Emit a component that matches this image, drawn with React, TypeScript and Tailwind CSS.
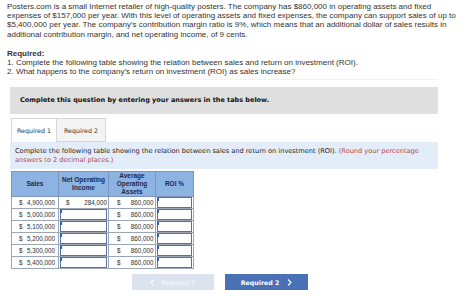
import React from "react";

const rows = [
  { sales: "4,900,000", noi: "284,000" },
  { sales: "5,000,000" },
  { sales: "5,100,000" },
  { sales: "5,200,000" },
  { sales: "5,300,000" },
  { sales: "5,400,000" },
];

function InputCell() {
  return (
    <td className="relative p-0 border border-[#9aa5b5] bg-white">
      <div className="h-[11px] mx-[1px] border border-[#5a7198] bg-white" />
      <div className="absolute left-[1px] top-[1px] w-[2px] h-[3px] bg-[#2f5fb3]" />
    </td>
  );
}

function Chevron({ left, color }: { left?: boolean; color: string }) {
  return (
    <svg width="5" height="7" viewBox="0 0 5 7" fill="none">
      <path
        d={left ? "M4 0.5L1 3.5L4 6.5" : "M1 0.5L4 3.5L1 6.5"}
        stroke={color}
        strokeWidth="1.1"
      />
    </svg>
  );
}

export default function App() {
  return (
    <div className="w-[474px] h-[296px] bg-white overflow-hidden font-['Liberation_Sans',Arial,sans-serif]">
      <div className="pl-[7px] pt-[2px] text-[8px] leading-[9.2px] text-[#333]">
        <p>
          Posters.com is a small Internet retailer of high-quality posters. The company has $860,000 in operating assets and fixed
          <br />
          expenses of $157,000 per year. With this level of operating assets and fixed expenses, the company can support sales of up to
          <br />
          $5,400,000 per year. The company’s contribution margin ratio is 9%, which means that an additional dollar of sales results in
          <br />
          additional contribution margin, and net operating income, of 9 cents.
        </p>
        <p className="mt-[9.8px] font-bold">Required:</p>
        <p>1. Complete the following table showing the relation between sales and return on investment (ROI).</p>
        <p>2. What happens to the company’s return on investment (ROI) as sales increase?</p>
      </div>

      <div className="ml-[10px] w-[428px] mt-[3px] border-t border-[#f1f1f1]" />

      <div className="ml-[10px] w-[428px] mt-[7px]">
        <div className="h-[27px] bg-[#dfdfdf] flex items-center pl-[10px] font-['DejaVu_Sans',Verdana,sans-serif] font-bold text-[6.5px] text-[#111]">
          Complete this question by entering your answers in the tabs below.
        </div>

        <div className="mt-[4px] h-[24px] flex font-['DejaVu_Sans',Verdana,sans-serif] text-[6.3px] text-[#333]">
          <div className="ml-[1px] w-[46px] h-full bg-white border border-b-0 border-[#d6d6d6] flex items-center justify-center">
            Required 1
          </div>
          <div className="w-[49px] h-full bg-[#f3f3f3] border border-l-0 border-[#d6d6d6] flex items-center justify-center">
            Required 2
          </div>
        </div>

        <div className="h-[27px] bg-[#e2edf9] pl-[5px] pt-[4.5px] font-['DejaVu_Sans',Verdana,sans-serif] text-[6.6px] leading-[9px] text-[#222]">
          Complete the following table showing the relation between sales and return on investment (ROI).{" "}
          <span className="text-[#b8474a]">(Round your percentage</span>
          <br />
          <span className="text-[#b8474a]">answers to 2 decimal places.)</span>
        </div>

        <table className="mt-[2px] ml-[1px] border-collapse text-[6.3px] text-[#2d2d2d] table-fixed">
          <colgroup>
            <col className="w-[47px]" />
            <col className="w-[50px]" />
            <col className="w-[47px]" />
            <col className="w-[38px]" />
          </colgroup>
          <thead>
            <tr className="h-[25px] bg-[#8db3e2] text-[#1d2a44] text-[6.5px] font-bold leading-[8px]">
              <th className="border border-[#7d96bd] font-bold">Sales</th>
              <th className="border border-[#7d96bd] font-bold">
                Net Operating
                <br />
                Income
              </th>
              <th className="border border-[#7d96bd] font-bold">
                Average
                <br />
                Operating
                <br />
                Assets
              </th>
              <th className="border border-[#7d96bd] font-bold">ROI %</th>
            </tr>
          </thead>
          <tbody>
            {rows.map((r) => (
              <tr key={r.sales} className="h-[12px] leading-[11px]">
                <td className="border border-[#9aa5b5] p-0">
                  <div className="flex justify-between pl-[7px] pr-[3px]">
                    <span>$</span>
                    <span>{r.sales}</span>
                  </div>
                </td>
                {r.noi ? (
                  <td className="border border-[#9aa5b5] p-0">
                    <div className="flex justify-between pl-[7px] pr-[1px]">
                      <span>$</span>
                      <span>{r.noi}</span>
                    </div>
                  </td>
                ) : (
                  <InputCell />
                )}
                <td className="border border-[#9aa5b5] p-0">
                  <div className="flex justify-between pl-[8px] pr-[1.5px]">
                    <span>$</span>
                    <span>860,000</span>
                  </div>
                </td>
                <InputCell />
              </tr>
            ))}
          </tbody>
        </table>

        <div className="mt-[5px] ml-[122px] flex gap-[11px] font-['DejaVu_Sans',Verdana,sans-serif] text-[6.3px]">
          <div className="w-[82px] h-[16px] bg-[#dde3ee] text-[#f7f9fc] flex items-center justify-center gap-[6px]">
            <Chevron left color="#f7f9fc" />
            <span>Required 1</span>
          </div>
          <div className="w-[83px] h-[16px] bg-[#4a70b6] text-white font-bold flex items-center justify-center gap-[8px]">
            <span>Required 2</span>
            <Chevron color="#ffffff" />
          </div>
        </div>
      </div>
    </div>
  );
}
